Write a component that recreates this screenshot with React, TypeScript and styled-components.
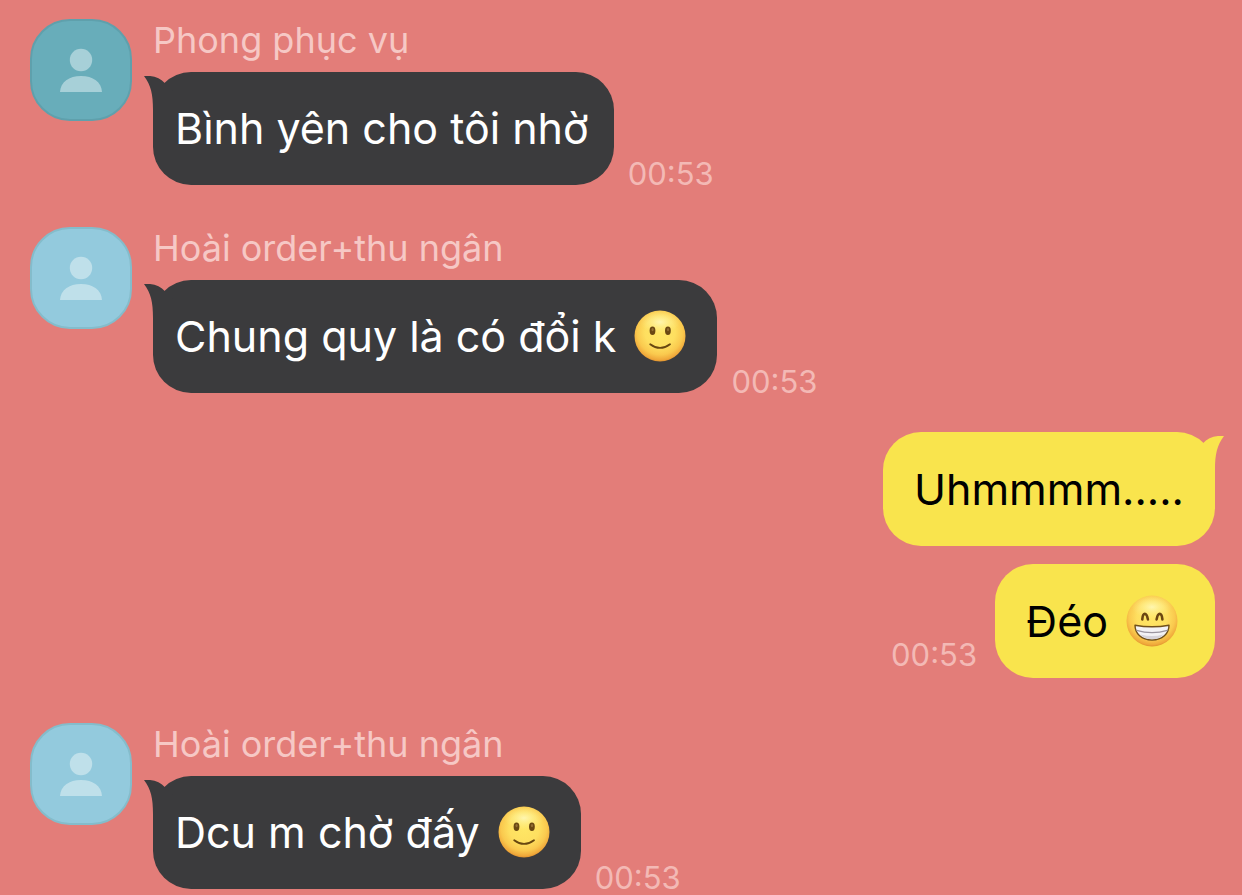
import React from "react";
import styled, { createGlobalStyle, css } from "styled-components";

const GlobalStyle = createGlobalStyle`
  *, *::before, *::after { box-sizing: border-box; }
  body {
    margin: 0;
    background: #e37d79;
    font-family: Inter, "Noto Sans", sans-serif;
  }
  h2, p { margin: 0; font-weight: 400; }
`;

type Side = "incoming" | "outgoing";

const Chat = styled.main`
  display: flow-root;
  padding: 0 27px 6px 30px;
`;

const OutgoingGroup = styled.section`
  display: flex;
  flex-direction: column;
  align-items: flex-end;
  gap: 18px;
  margin-top: 39px;
`;

const IncomingGroup = styled.section`
  display: flex;
  align-items: flex-start;
  gap: 21px;
  margin-top: 42px;

  &:first-child { margin-top: 19px; }
  ${OutgoingGroup} + & { margin-top: 45px; }
`;

const Avatar = styled.div<{ $fill: string; $edge: string }>`
  flex: none;
  width: 102px;
  height: 102px;
  border: 2px solid ${(p) => p.$edge};
  border-radius: 40px;
  background: ${(p) => p.$fill};

  svg { display: block; width: 100%; height: 100%; }
`;

const Content = styled.div`
  min-width: 0;
`;

const Sender = styled.h2`
  height: 53px;
  font-size: 36px;
  line-height: 42px;
  color: #f6c8c5;
`;

const MessageRow = styled.div<{ $side: Side }>`
  display: flex;
  flex-direction: ${(p) => (p.$side === "incoming" ? "row" : "row-reverse")};
  align-items: flex-end;
  gap: ${(p) => (p.$side === "incoming" ? 14 : 18)}px;
`;

const Bubble = styled.p<{ $side: Side }>`
  position: relative;
  display: flex;
  align-items: center;
  gap: 18px;
  border-radius: 38px;
  font-size: 43px;
  line-height: 54px;
  ${(p) =>
    p.$side === "incoming"
      ? css`
          min-height: 113px;
          padding: 29px 25px 30px 22px;
          background: #3b3b3d;
          color: #ffffff;
        `
      : css`
          min-height: 114px;
          padding: 30px 31px;
          background: #f9e44d;
          color: #000000;
        `}
`;

const Tail = styled.svg<{ $side: Side }>`
  position: absolute;
  top: 4px;
  width: 32px;
  height: 36px;
  ${(p) =>
    p.$side === "incoming"
      ? css`
          left: -9px;
          fill: #3b3b3d;
        `
      : css`
          right: -9px;
          fill: #f9e44d;
          transform: scaleX(-1);
        `}
`;

const Time = styled.time<{ $side: Side }>`
  font-size: 31px;
  line-height: 36px;
  color: #f3b9b5;
  margin-bottom: ${(p) => (p.$side === "incoming" ? -7 : 5)}px;
`;

const EmojiIcon = styled.svg`
  flex: none;
  width: 52px;
  height: 52px;
  margin-right: 6px;
`;

function Emoji({ kind, id }: { kind: "smile" | "grin"; id: string }) {
  return (
    <EmojiIcon viewBox="0 0 52 52" role="img" aria-label={kind === "smile" ? "🙂" : "😁"}>
      <defs>
        <radialGradient id={id + "-face"} cx="50%" cy="42%" r="59%">
          <stop offset="0" stopColor="#ffe765" />
          <stop offset="0.5" stopColor="#fedf60" />
          <stop offset="0.76" stopColor="#fac94e" />
          <stop offset="0.92" stopColor="#f0a93b" />
          <stop offset="1" stopColor="#dc8c2a" />
        </radialGradient>
        <radialGradient id={id + "-shine"}>
          <stop offset="0" stopColor="#fffbc4" stopOpacity="0.8" />
          <stop offset="0.5" stopColor="#fff8a8" stopOpacity="0.4" />
          <stop offset="1" stopColor="#fff09a" stopOpacity="0" />
        </radialGradient>
      </defs>
      <circle cx="26" cy="26" r="25.5" fill={`url(#${id}-face)`} />
      <ellipse cx="26" cy="12" rx="20" ry="11.5" fill={`url(#${id}-shine)`} />
      {kind === "smile" ? (
        <>
          <ellipse cx="18.5" cy="20.8" rx="2.9" ry="4.2" fill="#6a4812" />
          <ellipse cx="33.9" cy="20.8" rx="2.9" ry="4.2" fill="#6a4812" />
          <ellipse cx="18.6" cy="19.6" rx="1.1" ry="1.6" fill="#947035" />
          <ellipse cx="34" cy="19.6" rx="1.1" ry="1.6" fill="#947035" />
          <path
            d="M16.2 34.2Q26 41.6 36 34.2"
            fill="none"
            stroke="#684710"
            strokeWidth="1.8"
            strokeLinecap="round"
          />
        </>
      ) : (
        <>
          <path
            d="M16.3 24.4C16.8 17 20.6 17 21.9 24.4M30.6 24.4C31.9 17 35.7 17 36.4 24.4"
            fill="none"
            stroke="#6b4611"
            strokeWidth="2.6"
            strokeLinecap="round"
          />
          <path
            d="M9 30.2Q26 33.4 43 30.2C43 38.6 36.4 45 26 45S9 38.6 9 30.2Z"
            fill="#f3f2f5"
            stroke="#70501b"
            strokeWidth="1.4"
            strokeLinejoin="round"
          />
          <path
            d="M10.6 35.4Q26 39.8 41.4 35.4"
            fill="none"
            stroke="#9b95a0"
            strokeWidth="1.3"
          />
          <path d="M14.4 39.4Q26 42.6 37.6 39.4Q33.4 44.2 26 44.2T14.4 39.4Z" fill="#d6d3da" />
        </>
      )}
    </EmojiIcon>
  );
}

function Message({
  side,
  text,
  time,
  emoji,
  id,
  tail,
}: {
  side: Side;
  text: string;
  time?: string;
  emoji?: "smile" | "grin";
  id: string;
  tail?: boolean;
}) {
  return (
    <MessageRow $side={side}>
      <Bubble $side={side}>
        {tail && (
          <Tail $side={side} viewBox="0 0 32 36" aria-hidden="true">
            <path d="M0 0C9 -0.8 16 1.8 21.2 7.4L32 18V34H9C9 18 7 9.5 0 0Z" />
          </Tail>
        )}
        <span>{text}</span>
        {emoji && <Emoji kind={emoji} id={id} />}
      </Bubble>
      {time && <Time $side={side}>{time}</Time>}
    </MessageRow>
  );
}

function Incoming({
  sender,
  fill,
  edge,
  person,
  children,
}: {
  sender: string;
  fill: string;
  edge: string;
  person: string;
  children: React.ReactNode;
}) {
  return (
    <IncomingGroup>
      <Avatar $fill={fill} $edge={edge}>
        <svg viewBox="0 0 98 98" fill={person} aria-hidden="true">
          <circle cx="49" cy="39" r="11.2" />
          <path d="M28 71C28.500 61 37 55 49 55S69.500 61 70 71Z" />
        </svg>
      </Avatar>
      <Content>
        <Sender>{sender}</Sender>
        {children}
      </Content>
    </IncomingGroup>
  );
}

export default function App() {
  return (
    <>
      <GlobalStyle />
      <Chat>
        <Incoming sender="Phong phục vụ" fill="#68adba" edge="#5fa0ac" person="#a7d0d8">
          <Message id="m1" side="incoming" text="Bình yên cho tôi nhờ" time="00:53" tail />
        </Incoming>
        <Incoming sender="Hoài order+thu ngân" fill="#93cadd" edge="#84bccb" person="#bfe0ea">
          <Message id="m2" side="incoming" text="Chung quy là có đổi k" emoji="smile" time="00:53" tail />
        </Incoming>
        <OutgoingGroup>
          <Message id="m3" side="outgoing" text="Uhmmmm....." tail />
          <Message id="m4" side="outgoing" text="Đéo" emoji="grin" time="00:53" />
        </OutgoingGroup>
        <Incoming sender="Hoài order+thu ngân" fill="#93cadd" edge="#84bccb" person="#bfe0ea">
          <Message id="m5" side="incoming" text="Dcu m chờ đấy" emoji="smile" time="00:53" tail />
        </Incoming>
      </Chat>
    </>
  );
}
